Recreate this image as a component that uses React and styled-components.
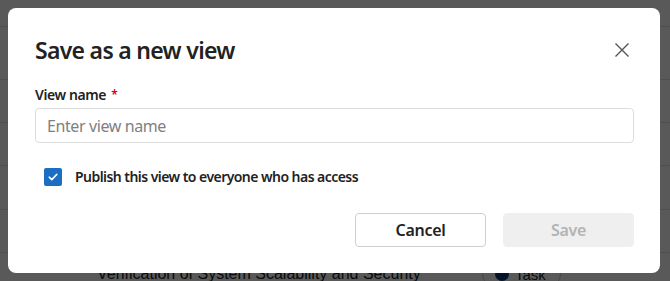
import React from 'react';
import styled, { createGlobalStyle } from 'styled-components';

const GlobalStyle = createGlobalStyle`
  html, body {
    margin: 0;
    padding: 0;
    width: 670px;
    height: 281px;
    overflow: hidden;
    background: #fff;
  }
  * {
    box-sizing: border-box;
  }
`;

const Page = styled.div`
  width: 670px;
  height: 281px;
  overflow: hidden;
  font-family: 'Liberation Sans', Arial, sans-serif;
  color: #222;
`;

const Row = styled.div`
  height: ${(props) => props.h}px;
  border-bottom: 1px solid #e2e2e2;
  display: grid;
  grid-template-columns: 385px auto;
  align-items: center;
  padding-left: 97px;
  font-size: 16px;
`;

const Pill = styled.span`
  display: inline-flex;
  justify-self: start;
  align-items: center;
  gap: 6px;
  height: 28px;
  padding: 0 14px 0 12px;
  border: 1px solid #ccc;
  border-radius: 14px;
  font-size: 15px;
`;

const Dot = styled.span`
  width: 14px;
  height: 14px;
  border-radius: 50%;
  background: #0b3a78;
`;

const Overlay = styled.div`
  position: fixed;
  inset: 0;
  background: rgba(0, 0, 0, 0.65);
`;

const Dialog = styled.div`
  position: fixed;
  left: 8px;
  top: 8px;
  width: 652px;
  height: 265px;
  background: #fff;
  border-radius: 8px;
  padding: 0 26px 0 27px;
  font-family: 'Noto Sans', 'Open Sans', sans-serif;
  color: #222;
  display: flex;
  flex-direction: column;
`;

const Header = styled.div`
  display: flex;
  align-items: center;
  justify-content: space-between;
  height: 78px;
  padding-top: 6px;
`;

const Title = styled.h2`
  margin: 0;
  font-size: 23px;
  font-weight: 600;
  letter-spacing: -0.7px;
  color: #222;
`;

const CloseButton = styled.button`
  border: none;
  background: none;
  padding: 0;
  margin-right: 2px;
  width: 20px;
  height: 20px;
  display: flex;
  align-items: center;
  justify-content: center;
  cursor: pointer;
`;

const Label = styled.label`
  display: block;
  font-size: 14px;
  font-weight: 600;
  letter-spacing: -0.4px;
  line-height: 18px;
  margin-bottom: 4px;
`;

const Required = styled.span`
  color: #d0021b;
  font-size: 12px;
  vertical-align: top;
  margin-left: 5px;
`;

const Input = styled.input`
  width: 100%;
  height: 35px;
  border: 1px solid #dcdcdc;
  border-radius: 4px;
  padding: 0 11px;
  font-family: inherit;
  font-size: 16px;
  letter-spacing: -0.4px;
  color: #222;
  outline: none;

  &::placeholder {
    color: #808080;
  }
`;

const CheckRow = styled.label`
  display: flex;
  align-items: center;
  gap: 13px;
  margin-top: 24px;
  padding-left: 9px;
  font-size: 14px;
  font-weight: 600;
  letter-spacing: -0.55px;
  color: #222;
`;

const Box = styled.span`
  width: 18px;
  height: 18px;
  border-radius: 2px;
  background: #1b6ec2;
  display: flex;
  align-items: center;
  justify-content: center;
`;

const Footer = styled.div`
  display: flex;
  justify-content: flex-end;
  gap: 17px;
  margin-top: 27px;
`;

const Button = styled.button`
  width: 131px;
  height: 34px;
  border-radius: 4px;
  font-family: inherit;
  font-size: 16px;
  font-weight: 600;
  letter-spacing: -0.3px;
  border: 1px solid ${(props) => (props.disabled ? '#efefef' : '#cfcfcf')};
  background: ${(props) => (props.disabled ? '#efefef' : '#fff')};
  color: ${(props) => (props.disabled ? '#b3b3b3' : '#222')};
  cursor: pointer;
`;

export default function App() {
  return (
    <>
      <GlobalStyle />
      <Page>
        <Row h={27} />
        <Row h={53} />
        <Row h={43} />
        <Row h={43} />
        <Row h={44} />
        <Row h={43} />
        <Row h={43}>
          <span>Verification of System Scalability and Security</span>
          <Pill>
            <Dot />
            Task
          </Pill>
        </Row>
      </Page>
      <Overlay />
      <Dialog>
        <Header>
          <Title>Save as a new view</Title>
          <CloseButton aria-label="Close">
            <svg width="16" height="16" viewBox="0 0 16 16">
              <path d="M1.5 1.5 L14.5 14.5 M14.5 1.5 L1.5 14.5" stroke="#555" strokeWidth="1.4" fill="none" />
            </svg>
          </CloseButton>
        </Header>
        <Label>
          View name
          <Required>*</Required>
        </Label>
        <Input placeholder="Enter view name" />
        <CheckRow>
          <Box>
            <svg width="10" height="8" viewBox="0 0 10 8">
              <path d="M1.2 4.2 L3.8 6.6 L8.8 1.4" stroke="#fff" strokeWidth="1.6" fill="none" strokeLinecap="round" strokeLinejoin="round" />
            </svg>
          </Box>
          Publish this view to everyone who has access
        </CheckRow>
        <Footer>
          <Button>Cancel</Button>
          <Button disabled>Save</Button>
        </Footer>
      </Dialog>
    </>
  );
}
